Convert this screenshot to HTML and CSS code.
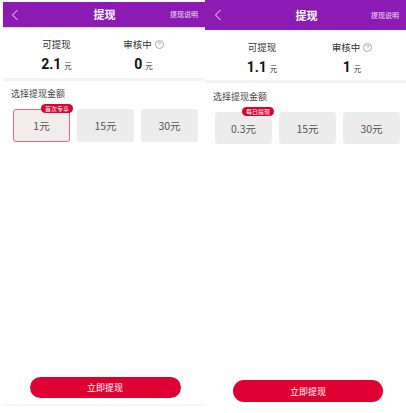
FILE: index.html
```html
<!DOCTYPE html>
<html lang="zh">
<head>
<meta charset="utf-8">
<link rel="stylesheet" href="styles.css">
</head>
<body>
<div class="screens">
  <section class="panel panel-a">
    <header class="bar">
      <svg class="back" viewBox="0 0 8 12" width="8" height="12"><path d="M6.5 1 L1.5 6 L6.5 11" fill="none" stroke="#fff" stroke-width="1"/></svg>
      <span class="bar-title">提现</span>
      <span class="bar-link">提现说明</span>
    </header>
    <div class="bar-line"></div>
    <div class="stats">
      <div class="stat">
        <div class="stat-label">可提现</div>
        <div class="stat-value"><b>2.1</b><small>元</small></div>
      </div>
      <div class="stat">
        <div class="stat-label">审核中<span class="help">?</span></div>
        <div class="stat-value"><b>0</b><small>元</small></div>
      </div>
    </div>
    <div class="band"></div>
    <div class="choose">选择提现金额</div>
    <div class="cards">
      <div class="card card-on">1元<span class="badge">首次专享</span></div>
      <div class="card">15元</div>
      <div class="card">30元</div>
    </div>
    <div class="grow"></div>
    <div class="btn">立即提现</div>
    <div class="foot"></div>
  </section>
  <section class="panel panel-b">
    <header class="bar">
      <svg class="back" viewBox="0 0 8 12" width="8" height="12"><path d="M6.5 1 L1.5 6 L6.5 11" fill="none" stroke="#fff" stroke-width="1"/></svg>
      <span class="bar-title">提现</span>
      <span class="bar-link">提现说明</span>
    </header>
    <div class="stats">
      <div class="stat">
        <div class="stat-label">可提现</div>
        <div class="stat-value"><b>1.1</b><small>元</small></div>
      </div>
      <div class="stat">
        <div class="stat-label">审核中<span class="help">?</span></div>
        <div class="stat-value"><b>1</b><small>元</small></div>
      </div>
    </div>
    <div class="band"></div>
    <div class="choose">选择提现金额</div>
    <div class="cards">
      <div class="card">0.3元<span class="badge">每日提现</span></div>
      <div class="card">15元</div>
      <div class="card">30元</div>
    </div>
    <div class="grow"></div>
    <div class="btn">立即提现</div>
  </section>
</div>
</body>
</html>
```
FILE: styles.css
```css
html, body {
  margin: 0;
  padding: 0;
  background: #fff;
}
body {
  width: 406px;
  height: 413px;
  overflow: hidden;
  font-family: "Noto Sans CJK SC", "Noto Sans", sans-serif;
  color: #333;
}
.screens {
  display: flex;
  height: 413px;
}
.panel {
  display: flex;
  flex-direction: column;
  background: #fff;
}
.panel-a {
  width: 202px;
  margin-left: 3px;
  padding-top: 2px;
}
.panel-b {
  width: 201px;
}
.bar {
  display: grid;
  grid-template-columns: 1fr auto 1fr;
  align-items: center;
  background: #8c1bb3;
  color: #fff;
  padding: 0 7px 0 8px;
}
.panel-a .bar { height: 25px; }
.panel-b .bar { height: 30px; padding: 0 7px 0 9px; }
.back { display: block; opacity: 0.9; }
.bar-title {
  font-size: 11px;
  font-weight: 700;
  line-height: 1;
}
.bar-link {
  justify-self: end;
  font-size: 7px;
  line-height: 1;
  opacity: 0.85;
}
.bar-line {
  height: 1px;
  background: #e3d3ec;
}
.stats {
  display: grid;
  grid-template-columns: 87px 87px;
  text-align: center;
}
.panel-a .stats { padding: 10px 0 0 10px; height: 40px; }
.panel-b .stats { padding: 11px 0 0 12px; height: 39px; grid-template-columns: 90px 90px; }
.stat-label {
  font-size: 9.5px;
  line-height: 13px;
  color: #333;
  display: flex;
  justify-content: center;
  align-items: center;
}
.help {
  display: inline-block;
  width: 7px;
  height: 7px;
  border: 0.8px solid #aaa;
  border-radius: 50%;
  font-size: 6px;
  line-height: 7px;
  color: #999;
  margin-left: 3px;
  text-align: center;
  font-family: "Liberation Sans", sans-serif;
}
.stat-value {
  margin-top: 3px;
  line-height: 16px;
}
.stat-value b {
  font-family: "Roboto", "Liberation Sans", sans-serif;
  font-size: 14px;
  font-weight: 700;
  color: #111;
}
.stat-value small {
  font-size: 7.5px;
  margin-left: 3px;
  color: #333;
}
.band {
  height: 3px;
  background: #f3f3f3;
}
.choose {
  font-size: 9px;
  line-height: 12px;
  color: #444;
}
.panel-a .choose { padding: 7px 0 0 8px; }
.panel-b .choose { padding: 8px 0 0 8px; }
.cards {
  display: grid;
  grid-template-columns: repeat(3, 57px);
  column-gap: 7px;
}
.panel-a .cards { padding: 9px 0 0 10px; }
.panel-b .cards { padding: 9px 0 0 10px; }
.card {
  position: relative;
  height: 33px;
  border-radius: 3px;
  background: #ececec;
  display: flex;
  justify-content: center;
  align-items: center;
  font-size: 10.5px;
  color: #555;
  box-sizing: border-box;
}
.panel-b .card { height: 32px; }
.card-on {
  border: 1px solid #e36a80;
  background: #f2eded;
}
.badge {
  position: absolute;
  top: -5px;
  right: -2px;
  height: 9px;
  padding: 0 4px;
  border-radius: 5px;
  background: #df0032;
  color: #fff;
  font-size: 6px;
  line-height: 9px;
  white-space: nowrap;
}
.card-on .badge { top: -6px; right: -4px; }
.grow { flex: 1; }
.btn {
  align-self: center;
  width: 151px;
  height: 21px;
  border-radius: 11px;
  background: #df0032;
  color: #fff;
  font-size: 9px;
  display: flex;
  align-items: center;
  justify-content: center;
}
.panel-a .btn { margin-bottom: 6px; margin-left: 2px; }
.panel-b .btn { margin-bottom: 11px; width: 150px; height: 22px; margin-left: 5px; }
.foot {
  height: 2px;
  background: #f6f6f6;
  margin-bottom: 7px;
}
```
